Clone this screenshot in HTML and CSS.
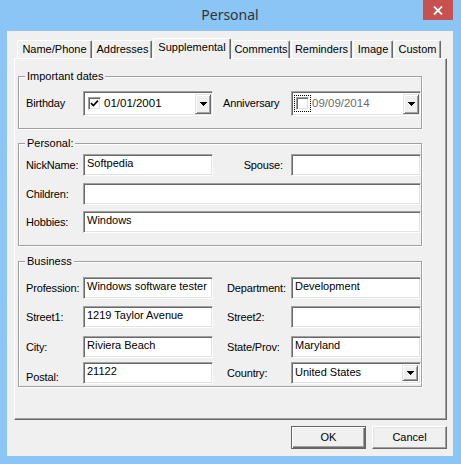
FILE: index.html
```html
<!DOCTYPE html>
<html>
<head>
<meta charset="utf-8">
<link rel="stylesheet" href="styles.css">
</head>
<body>
<div class="window">
  <div class="titlebar">
    <span class="title">Personal</span>
    <div class="close"><svg width="10" height="9" viewBox="0 0 10 9"><path d="M1 0.5 L9 8.5 M9 0.5 L1 8.5" stroke="#fff" stroke-width="1.8"/></svg></div>
  </div>
  <div class="client">
    <div class="tabs">
      <div class="tab t-name">Name/Phone</div>
      <div class="tab t-addr">Addresses</div>
      <div class="tab t-supp active">Supplemental</div>
      <div class="tab t-comm">Comments</div>
      <div class="tab t-rem">Reminders</div>
      <div class="tab t-img">Image</div>
      <div class="tab t-cust">Custom</div>
    </div>
    <div class="panel">
      <div class="group g1">
        <div class="legend">Important dates</div>
        <div class="row">
          <span class="lbl">Birthday</span>
          <div class="sunken picker">
            <span class="check"><svg width="9" height="9" viewBox="0 0 9 9"><path d="M1 4.2 L3.3 6.6 L8 1.6" fill="none" stroke="#000" stroke-width="1.7"/></svg></span>
            <span class="dtext">01/01/2001</span>
            <span class="dd"><svg width="7" height="4" viewBox="0 0 7 4"><path d="M0 0h7v1h-1v1h-1v1h-1v1h-1v-1h-1v-1h-1v-1h-1z" fill="#000"/></svg></span>
          </div>
          <span class="lbl2 l-ann">Anniversary</span>
          <div class="sunken picker">
            <span class="check focus"></span>
            <span class="dtext off">09/09/2014</span>
            <span class="dd"><svg width="7" height="4" viewBox="0 0 7 4"><path d="M0 0h7v1h-1v1h-1v1h-1v1h-1v-1h-1v-1h-1v-1h-1z" fill="#000"/></svg></span>
          </div>
        </div>
      </div>
      <div class="group g2">
        <div class="legend">Personal:</div>
        <div class="row r1">
          <span class="lbl">NickName:</span>
          <div class="sunken field">Softpedia</div>
          <span class="lbl2 l-right">Spouse:</span>
          <div class="sunken field"></div>
        </div>
        <div class="row r2">
          <span class="lbl">Children:</span>
          <div class="sunken field wide"></div>
        </div>
        <div class="row r3">
          <span class="lbl">Hobbies:</span>
          <div class="sunken field wide">Windows</div>
        </div>
      </div>
      <div class="group g3">
        <div class="legend">Business</div>
        <div class="row r1">
          <span class="lbl">Profession:</span>
          <div class="sunken field">Windows software tester</div>
          <span class="lbl2 l-dep">Department:</span>
          <div class="sunken field">Development</div>
        </div>
        <div class="row r2">
          <span class="lbl">Street1:</span>
          <div class="sunken field">1219 Taylor Avenue</div>
          <span class="lbl2 l-dep">Street2:</span>
          <div class="sunken field"></div>
        </div>
        <div class="row r3">
          <span class="lbl">City:</span>
          <div class="sunken field">Riviera Beach</div>
          <span class="lbl2 l-dep">State/Prov:</span>
          <div class="sunken field">Maryland</div>
        </div>
        <div class="row r4">
          <span class="lbl l-low">Postal:</span>
          <div class="sunken field">21122</div>
          <span class="lbl2 l-dep">Country:</span>
          <div class="sunken field combo">
            <span class="ctext">United States</span>
            <span class="dd dd-small"><svg width="7" height="4" viewBox="0 0 7 4"><path d="M0 0h7v1h-1v1h-1v1h-1v1h-1v-1h-1v-1h-1v-1h-1z" fill="#000"/></svg></span>
          </div>
        </div>
      </div>
    </div>
    <div class="footer">
      <div class="btn default">OK</div>
      <div class="btn">Cancel</div>
    </div>
  </div>
</div>
</body>
</html>
```

FILE: styles.css
```css
* { box-sizing: border-box; }
html, body { margin: 0; padding: 0; }
body {
  width: 461px;
  height: 464px;
  overflow: hidden;
  font-family: "Liberation Sans", Arial, sans-serif;
  font-size: 11px;
  color: #000;
}
.window {
  width: 461px;
  height: 464px;
  background: #8bc5f5;
  padding: 0 8px 8px 7px;
  display: flex;
  flex-direction: column;
}
.titlebar {
  height: 31px;
  flex: none;
  display: flex;
  justify-content: center;
  position: relative;
}
.title {
  font-family: "Noto Sans", "Open Sans", sans-serif;
  font-size: 14px;
  color: #333;
  line-height: 30px;
}
.close {
  position: absolute;
  top: 0;
  right: 0;
  width: 30px;
  height: 20px;
  background: #c75050;
  display: flex;
  align-items: center;
  justify-content: center;
}
.client {
  flex: 1;
  background: #f0f0f0;
  padding: 7px 6px 0 7px;
  display: flex;
  flex-direction: column;
}
.tabs {
  height: 20px;
  display: flex;
  align-items: flex-end;
  padding-left: 3px;
}
.tab {
  height: 18px;
  margin-right: 1px;
  border-top: 1px solid #fff;
  border-left: 1px solid #fff;
  border-right: 1px solid #696969;
  box-shadow: inset -1px 0 0 #a0a0a0;
  border-radius: 2px 2px 0 0;
  text-align: center;
  padding-top: 2px;
  line-height: 13px;
  white-space: nowrap;
  background: #f0f0f0;
}
.tab.active {
  height: 21px;
  margin-bottom: -1px;
  position: relative;
  z-index: 1;
}
.t-name { width: 75px; }
.t-addr { width: 59px; }
.t-supp { width: 78px; }
.t-comm { width: 58px; }
.t-rem { width: 61px; }
.t-img { width: 40px; }
.t-cust { width: 47px; }
.panel {
  height: 362px;
  border-top: 1px solid #fff;
  border-left: 1px solid #fff;
  border-right: 1px solid #696969;
  border-bottom: 1px solid #696969;
  box-shadow: inset -1px -1px 0 #a0a0a0;
  padding: 17px 0 0 3px;
}
.group {
  width: 404px;
  border: 1px solid #a0a0a0;
  box-shadow: 1px 1px 0 #fff, inset 1px 1px 0 #fff;
}
.legend {
  margin: -7px 0 0 6px;
  padding: 0 2px;
  width: fit-content;
  background: #f0f0f0;
  line-height: 13px;
}
.g1 { padding-bottom: 12px; }
.g2 { margin-top: 14px; padding-bottom: 12px; }
.g3 { margin-top: 15px; padding-bottom: 2px; }
.row {
  display: flex;
  align-items: center;
  padding-left: 7px;
  height: 22px;
}
.g1 .row { margin-top: 8px; height: 25px; }
.g2 .r1 { margin-top: 4px; }
.g2 .r2 { margin-top: 7px; }
.g2 .r3 { margin-top: 6px; }
.g3 .r1 { margin-top: 9px; }
.g3 .r2 { margin-top: 7px; }
.g3 .r3 { margin-top: 8px; }
.g3 .r4 { margin-top: 4px; }
.lbl { width: 57px; white-space: nowrap; line-height: 13px; letter-spacing: -0.15px; }
.lbl2 { width: 78px; white-space: nowrap; line-height: 13px; letter-spacing: -0.15px; }
.l-ann { padding-left: 10px; }
.l-right { text-align: right; padding-right: 8px; }
.l-dep { padding-left: 14px; }
.l-low { padding-top: 9px; }
.sunken {
  background: #fff;
  border-top: 1px solid #a0a0a0;
  border-left: 1px solid #a0a0a0;
  border-right: 1px solid #fff;
  border-bottom: 1px solid #fff;
  box-shadow: inset 1px 1px 0 #696969, inset -1px -1px 0 #e3e3e3;
}
.field {
  width: 130px;
  height: 22px;
  padding: 2px 2px 0 3px;
  line-height: 13px;
  white-space: nowrap;
  overflow: hidden;
  font-size: 11px;
}
.field.wide { width: 338px; }
.picker {
  width: 130px;
  height: 25px;
  display: flex;
  align-items: center;
  padding: 0 1px 0 4px;
}
.check {
  width: 13px;
  height: 13px;
  flex: none;
  background: #fff;
  border-top: 1px solid #a0a0a0;
  border-left: 1px solid #a0a0a0;
  border-right: 1px solid #fff;
  border-bottom: 1px solid #fff;
  box-shadow: inset 1px 1px 0 #696969, inset -1px -1px 0 #e3e3e3;
  display: flex;
  align-items: center;
  justify-content: center;
}
.check.focus {
  outline: 1px dotted #000;
  outline-offset: 1px;
}
.dtext {
  margin-left: 3px;
  font-size: 11.5px;
  line-height: 13px;
}
.dtext.off { color: #6d6d6d; }
.dd {
  margin-left: auto;
  width: 16px;
  height: 20px;
  flex: none;
  background: #f0f0f0;
  border-top: 1px solid #e3e3e3;
  border-left: 1px solid #e3e3e3;
  border-right: 1px solid #696969;
  border-bottom: 1px solid #696969;
  box-shadow: inset 1px 1px 0 #fff, inset -1px -1px 0 #a0a0a0;
  display: flex;
  align-items: center;
  justify-content: center;
}
.combo {
  display: flex;
  align-items: center;
  padding: 0 2px 0 3px;
}
.ctext { line-height: 13px; margin-top: -1px; }
.dd-small { height: 16px; }
.footer {
  display: flex;
  justify-content: flex-end;
  gap: 6px;
  margin-top: 6px;
}
.btn {
  width: 75px;
  height: 23px;
  background: #f0f0f0;
  border-top: 1px solid #fff;
  border-left: 1px solid #fff;
  border-right: 1px solid #696969;
  border-bottom: 1px solid #696969;
  box-shadow: inset -1px -1px 0 #a0a0a0, inset 1px 1px 0 #e3e3e3;
  text-align: center;
  line-height: 21px;
}
.btn.default {
  border: 1px solid #646464;
  box-shadow: inset 1px 1px 0 #fff, inset -1px -1px 0 #696969, inset -2px -2px 0 #a0a0a0;
}
```
